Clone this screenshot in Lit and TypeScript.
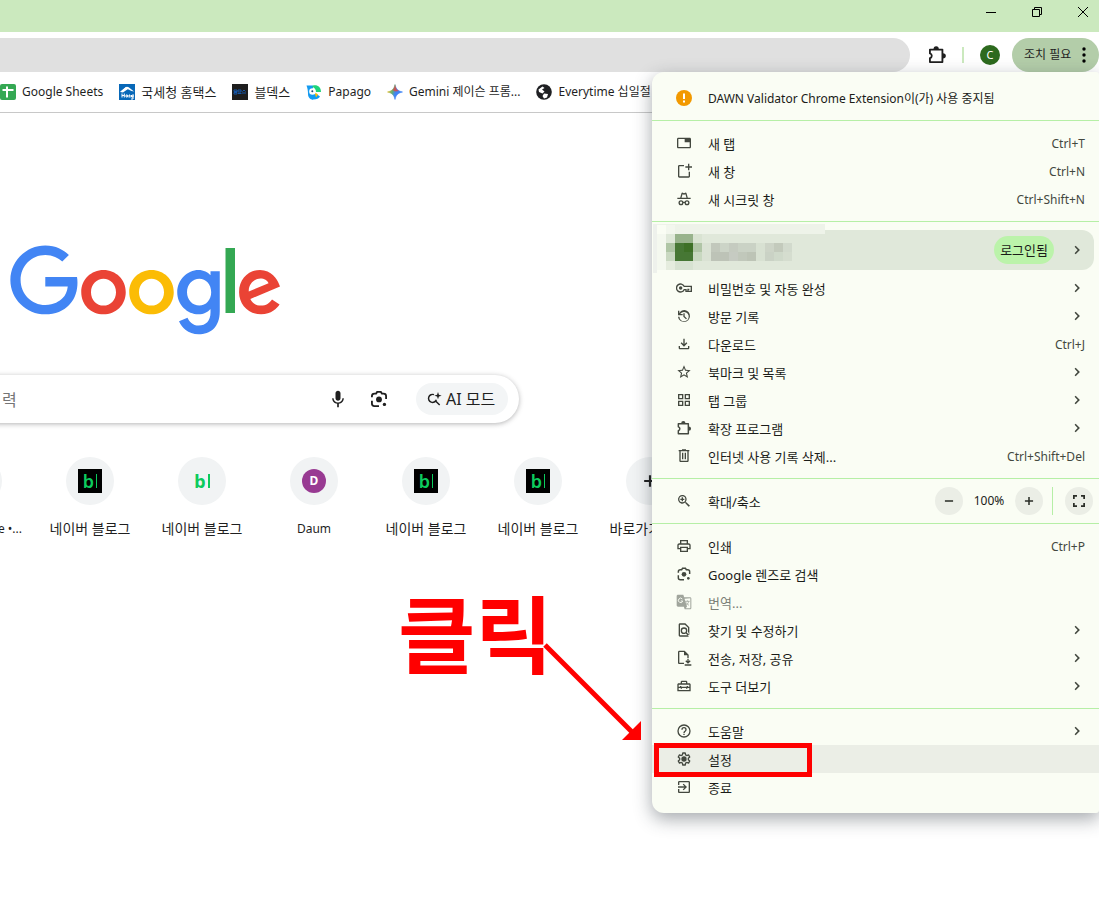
import { LitElement, html, svg, css, nothing } from "lit";
import { customElement } from "lit/decorators.js";
import { classMap } from "lit/directives/class-map.js";

const icon = (body: unknown, size = 16, box = 24) =>
  html`<svg class="icon" width=${size} height=${size} viewBox="0 0 ${box} ${box}" aria-hidden="true">${body}</svg>`;

const glyphs: Record<string, unknown> = {
  tab: svg`<path d="M20.500 4h-17C2.400 4 1.500 4.900 1.500 6v12c0 1.100.9 2 2 2h17c1.100 0 2-.9 2-2V6c0-1.100-.9-2-2-2zm0 14h-17V6H13v5h7.500z"/>`,
  win: svg`<path d="M12 3v2H5v15h14v-7h2v7c0 1.100-.9 2-2 2H5c-1.100 0-2-.9-2-2V5c0-1.100.9-2 2-2h7zm6-2h2v4h4v2h-4v4h-2V7h-4V5h4z"/>`,
  incognito: svg`<path d="M8.200 3.500 6.300 10H2v2h20v-2h-4.300l-1.900-6.500a1.500 1.500 0 0 0-2-.9L12 3.300l-1.800-.7a1.500 1.500 0 0 0-2 .9zM9.800 4.700l2.200.8 2.200-.8L15.700 10H8.300z"/><path fill="none" stroke="currentColor" stroke-width="2" d="M10.300 17.500a2.800 2.800 0 1 1-5.600 0 2.800 2.800 0 0 1 5.600 0zm9 0a2.800 2.800 0 1 1-5.600 0 2.800 2.800 0 0 1 5.600 0zM10.300 17h3.400"/>`,
  key: svg`<path fill="none" stroke="currentColor" stroke-width="2" d="M12.200 9.500A6 6 0 1 0 12.200 14.500H15V17H23V9.500zM18 17v-3h2"/><circle cx="7" cy="12" r="2.600"/>`,
  history: svg`<path d="M13 3a9 9 0 0 0-8 4.900V4H3v7h7V9H6.300A7 7 0 1 1 5.100 13H3a9 9 0 1 0 10-10zm-2 5v5l4 4 1.400-1.400-3.400-3.400V8z"/>`,
  download: svg`<path d="M12 16l-5-5 1.400-1.450 2.600 2.600V4h2v8.150l2.600-2.600L17 11zM4 15h2v3h12v-3h2v3c0 1.100-.9 2-2 2H6c-1.100 0-2-.9-2-2z"/>`,
  star: svg`<path d="M22 9.240l-7.190-.62L12 2 9.190 8.630 2 9.240l5.460 4.730L5.820 21 12 17.270 18.180 21l-1.630-7.030zM12 15.400l-3.760 2.270 1-4.280-3.320-2.880 4.380-.38L12 6.100l1.710 4.040 4.380.38-3.320 2.880 1 4.280z"/>`,
  grid: svg`<path fill-rule="evenodd" d="M3 3h8v8H3zm2 2v4h4V5zm8-2h8v8h-8zm2 2v4h4V5zM3 13h8v8H3zm2 2v4h4v-4zm8-2h8v8h-8zm2 2v4h4v-4z"/>`,
  puzzle: svg`<path fill="none" stroke="currentColor" stroke-width="2.200" stroke-linejoin="round" d="M3.500 5.500h15v15h-15v-4.600a3 3 0 0 0 0-5.800z"/><path d="M7.800 5a3.200 3.600 0 0 1 6.400 0zM19 9.800a3.600 3.200 0 0 1 0 6.400z"/>`,
  trash: svg`<path d="M15 3V2H9v1H4v2h1v14c0 1.100.9 2 2 2h10c1.100 0 2-.9 2-2V5h1V3zm2 16H7V5h10zM9 7h2v10H9zm4 0h2v10h-2z"/>`,
  zoom: svg`<path d="M15.500 14h-.79l-.28-.27A6.500 6.500 0 1 0 13.730 14.430l.27.28v.79l5 4.990L21 19zm-6 0a4.500 4.500 0 1 1 0-9 4.500 4.500 0 0 1 0 9zM8.500 6.500h2v2h2v2h-2v2h-2v-2h-2v-2h2z"/>`,
  print: svg`<path d="M19 8h-1V3H6v5H5c-1.660 0-3 1.340-3 3v6h4v4h12v-4h4v-6c0-1.660-1.340-3-3-3zM8 5h8v3H8zm8 12v2H8v-4h8zm2-2v-2H6v2H4v-4c0-.55.45-1 1-1h14c.55 0 1 .45 1 1v4z"/>`,
  lens: svg`<path fill="none" stroke="currentColor" stroke-width="2.200" d="M3.500 10V8.500a3 3 0 0 1 3-3h2l1.300-2h4.400l1.300 2h2a3 3 0 0 1 3 3V12M3.500 14v3.500a3 3 0 0 0 3 3H12"/><circle cx="12" cy="12.500" r="3.500"/><circle cx="18.500" cy="18.500" r="2"/>`,
  translate: svg`<path d="M3 1h8l1.200 4H21c1.100 0 2 .9 2 2v14c0 1.100-.9 2-2 2h-8l-1.200-4H3c-1.100 0-2-.9-2-2V3c0-1.100.9-2 2-2zm9.800 6 3.700 12.200-2 2.300H21.500V6.500z" fill-rule="evenodd"/><path fill="none" stroke="#fafdf4" stroke-width="1.400" d="M9.500 7.500a3.300 3.300 0 1 0 .6 3H7.200"/><path fill="none" stroke="currentColor" stroke-width="1.200" d="M13.500 11h7M17 9.500V11M19 11c-.5 3-2.500 5-4 6M15 12.500c1 2 2.500 3.500 4.500 4.500"/>`,
  find: svg`<path d="M14 2H6c-1.100 0-2 .9-2 2v16c0 1.100.9 2 2 2h12c.45 0 .85-.15 1.190-.4l-4.430-4.430c-.8.520-1.740.83-2.760.83a5 5 0 1 1 5-5c0 1.020-.31 1.970-.83 2.750L20 19.600V8zM6 20V4h7.200L18 8.800v6.100l.2.200L20 19.600 16.500 20zM9 13a3 3 0 1 0 6 0 3 3 0 0 0-6 0z" fill-rule="evenodd"/>`,
  share: svg`<path d="M13 1H5c-1.100 0-2 .9-2 2v16c0 1.100.9 2 2 2h7v-2H5V3h7v5h5v4h2V7zM17 13h2v4l1.600-1.600L22 16.800l-4 4-4-4 1.400-1.400L17 17zM13 21.500h10v2H13z"/>`,
  tools: svg`<path d="M20 8h-3V6c0-1.100-.9-2-2-2H9c-1.100 0-2 .9-2 2v2H4c-1.100 0-2 .9-2 2v10h20V10c0-1.100-.9-2-2-2zM9 6h6v2H9zm11 12H4v-3h3v1h2v-1h6v1h2v-1h3zm-2-5v-1h-2v1H8v-1H6v1H4v-3h16v3z"/>`,
  help: svg`<path d="M11 18h2v-2h-2zm1-16a10 10 0 1 0 0 20 10 10 0 0 0 0-20zm0 18a8 8 0 1 1 0-16 8 8 0 0 1 0 16zm0-14a4 4 0 0 0-4 4h2a2 2 0 1 1 4 0c0 2-3 1.750-3 5h2c0-2.250 3-2.500 3-5a4 4 0 0 0-4-4z"/>`,
  gear: svg`<path fill="none" stroke="currentColor" stroke-width="2" stroke-linejoin="round" d="M10.200 3h3.600l.6 2.800 1.700 1 2.700-.9 1.800 3.100-2.100 1.900v2.200l2.100 1.900-1.800 3.100-2.700-.9-1.700 1-.6 2.800h-3.600l-.6-2.800-1.700-1-2.700.9L3.400 15l2.100-1.900v-2.200L3.400 9l1.800-3.100 2.700.9 1.700-1z"/><circle cx="12" cy="12" r="4"/>`,
  exit: svg`<path d="M10.090 15.590L11.500 17l5-5-5-5-1.410 1.410L12.670 11H3v2h9.670zM19 3H5c-1.100 0-2 .9-2 2v4h2V5h14v14H5v-4H3v4c0 1.100.9 2 2 2h14c1.100 0 2-.9 2-2V5c0-1.100-.9-2-2-2z"/>`,
  mic: svg`<path d="M12 14c1.660 0 3-1.340 3-3V5c0-1.660-1.340-3-3-3S9 3.340 9 5v6c0 1.660 1.340 3 3 3zm5.300-3c0 3-2.540 5.100-5.300 5.100S6.700 14 6.700 11H5c0 3.410 2.720 6.230 6 6.720V22h2v-4.280c3.280-.48 6-3.300 6-6.720z"/>`,
  ai: svg`<path fill="none" stroke="currentColor" stroke-width="2.200" d="M12 5.500A6 6 0 1 0 15.500 13M14 14.500l6.500 6.500"/><path d="M18 1.500l1.400 4.100L23.500 7l-4.100 1.400L18 12.500l-1.400-4.100L12.500 7l4.100-1.400z"/>`,
  chevron: svg`<path d="M8.400 16.800 13 12 8.400 7.200 10 5.600l6.400 6.400-6.400 6.400z"/>`,
  minus: svg`<path d="M5 10.700h14v2.600H5z"/>`,
  plus: svg`<path d="M19 13.300h-5.700V19h-2.600v-5.700H5v-2.600h5.700V5h2.600v5.700H19z"/>`,
  full: svg`<path d="M3 3h6v2.600H5.600V9H3zm12 0h6v6h-2.600V5.600H15zM3 15h2.600v3.400H9V21H3zm15.400 0H21v6h-6v-2.600h3.400z"/>`,
};

const favicons: Record<string, unknown> = {
  sheets: svg`<rect width="16" height="16" rx="2" fill="#34a853"/><path d="M7 2.500v11M2.500 6h11" stroke="#fff" stroke-width="2"/>`,
  hometax: svg`<rect width="16" height="16" fill="#0868b8"/><path d="M1 8 6.500 3.300c1-.8 2-.8 3.200 0L15 7.500 12.500 7 8.500 5z" fill="#fff"/><path d="M1 8l6-5 2 2-5 3.500z" fill="#fff"/><path d="M3 9.500v4M5.300 9.500v4M3 11.500h2.300M7 11h1.400v2H7zM10 13.500V11h1v2.500M12.500 11v2h1.500v-2.500V15h-2" fill="none" stroke="#fff" stroke-width="1"/>`,
  dex: svg`<rect width="16" height="16" fill="#1e1e1e"/><path d="M2 6h3v1.500H2zM2 8.500h3V10H2zM6 6h3v2H6zM10 9h4M6 9.500h3.500M10.500 7.500 12 6l1.500 1.500" fill="none" stroke="#1556a8" stroke-width="1"/>`,
  papago: svg`<path d="M.5 1.500H7v14H6C3 15 2 12 2 10 2 7 1.500 4 .5 1.500z" fill="#139af0"/><path d="M6 15.500c4 .3 7-.8 8-3L8.500 8.500 6 11z" fill="#0b9cf5"/><path d="M7 1.500c4.500-1 8 1.500 8 6.500H9.500C9.500 5 8.500 3.500 6 3z" fill="#1ed47a"/><path d="M8.500 8l3.500 2.500-2 3z" fill="#fbbc05"/><circle cx="6.500" cy="7.500" r="3.300" fill="#fff"/><circle cx="6.300" cy="7.200" r="1" fill="#164a7a"/>`,
  gemini: svg`<defs><linearGradient id="gem" x1="0" y1=".3" x2="1" y2=".6"><stop offset="0" stop-color="#f9bc15"/><stop offset=".35" stop-color="#5fae7a"/><stop offset=".55" stop-color="#4285f4"/><stop offset="1" stop-color="#3b82f6"/></linearGradient></defs><path d="M8 .5C9 5 11 7 15.500 8 11 9 9 11 8 15.500 7 11 5 9 .5 8 5 7 7 5 8 .5z" fill="url(#gem)" stroke="url(#gem)" stroke-width=".6"/><path d="M8 .5c.8 4 2 5.500 4 6.500L8 7.500 5.500 6C7 5 7.500 3 8 .5z" fill="#ea4335" opacity=".75"/>`,
  everytime: svg`<circle cx="8" cy="8" r="7.800" fill="#1f2023"/><path d="M2.500 5.500 6.500 2.500 8.500 4 6 5.500 8.500 7.500 6.500 9.500 3 8zM8 9.500l4 .5-1 3.500-3 1-1.500-2.500z" fill="#fff"/>`,
};

interface Row {
  icon: string;
  label: string;
  keys?: string;
  more?: boolean;
  state?: string;
}

const tabRows: Row[] = [
  { icon: "tab", label: "새 탭", keys: "Ctrl+T" },
  { icon: "win", label: "새 창", keys: "Ctrl+N" },
  { icon: "incognito", label: "새 시크릿 창", keys: "Ctrl+Shift+N" },
];
const dataRows: Row[] = [
  { icon: "key", label: "비밀번호 및 자동 완성", more: true },
  { icon: "history", label: "방문 기록", more: true },
  { icon: "download", label: "다운로드", keys: "Ctrl+J" },
  { icon: "star", label: "북마크 및 목록", more: true },
  { icon: "grid", label: "탭 그룹", more: true },
  { icon: "puzzle", label: "확장 프로그램", more: true },
  { icon: "trash", label: "인터넷 사용 기록 삭제...", keys: "Ctrl+Shift+Del" },
];
const pageRows: Row[] = [
  { icon: "print", label: "인쇄", keys: "Ctrl+P" },
  { icon: "lens", label: "Google 렌즈로 검색" },
  { icon: "translate", label: "번역...", state: "off" },
  { icon: "find", label: "찾기 및 수정하기", more: true },
  { icon: "share", label: "전송, 저장, 공유", more: true },
  { icon: "tools", label: "도구 더보기", more: true },
];
const endRows: Row[] = [
  { icon: "help", label: "도움말", more: true },
  { icon: "gear", label: "설정", state: "hover" },
  { icon: "exit", label: "종료" },
];

const bookmarks = [
  ["sheets", "Google Sheets"],
  ["hometax", "국세청 홈택스"],
  ["dex", "블덱스"],
  ["papago", "Papago"],
  ["gemini", "Gemini 제이슨 프롬..."],
  ["everytime", "Everytime 십일절"],
];

const shortcuts = [
  ["none", "e •..."],
  ["dark", "네이버 블로그"],
  ["light", "네이버 블로그"],
  ["daum", "Daum"],
  ["dark", "네이버 블로그"],
  ["dark", "네이버 블로그"],
  ["add", "바로가기 추가"],
];

const startsLatin = (text: string) => /^[A-Za-z]/.test(text);

/* Pixelated account area: x, y, width, height, colour. */
const mosaic: [number, number, number, number, string][] = [
  [1, 0, 4, 49, "#eef1ec"], [5, 0, 168, 10, "#eef3e9"],
  [5, 1, 9, 9, "#fafdf4"], [5, 10, 9, 36, "#f4f8ef"], [14, 1, 9, 9, "#f3f7ee"],
  [14, 10, 9, 9, "#e0e9da"], [23, 10, 18, 9, "#98b38c"], [41, 10, 9, 9, "#d9e3d2"],
  [14, 19, 9, 9, "#b0c6a6"], [23, 19, 9, 9, "#467734"], [32, 19, 9, 9, "#3d7026"], [41, 19, 9, 9, "#b0c5a6"],
  [14, 28, 9, 9, "#c9d8c1"], [23, 28, 18, 9, "#467734"], [41, 28, 9, 9, "#c8d8c0"],
  [14, 37, 9, 9, "#e5ecde"], [23, 37, 18, 9, "#d7e2d1"], [50, 19, 9, 18, "#dae2d4"],
  [59, 19, 9, 9, "#c2c8bc"], [68, 19, 9, 9, "#ccd4c7"], [77, 19, 9, 9, "#c5cbc0"], [86, 19, 18, 9, "#cad2c5"],
  [104, 19, 9, 9, "#d8e1d2"], [113, 19, 9, 9, "#cdd4c7"], [122, 19, 9, 9, "#c3cabc"], [131, 19, 9, 9, "#d2dacd"],
  [59, 28, 18, 9, "#bdc3b7"], [77, 28, 9, 9, "#c6cbc2"], [86, 28, 9, 9, "#c1c8bb"], [95, 28, 9, 9, "#bdc4b6"],
  [104, 28, 9, 9, "#d8e1d2"], [113, 28, 9, 9, "#cad2c5"], [122, 28, 9, 9, "#cfd9ca"], [131, 28, 9, 9, "#d5ddcf"],
];

@customElement("app-root")
export class AppRoot extends LitElement {
  static styles = css`
    :host {
      display: block;
      position: relative;
      min-height: 100vh;
      overflow: hidden;
      background: #fff;
      color: #1f1f1f;
      font: 13px/16px "Noto Sans", "Noto Sans CJK KR", sans-serif;
    }
    * { box-sizing: border-box; }
    button, input { font: inherit; color: inherit; border: 0; background: none; padding: 0; margin: 0; outline: 0; }
    a { color: inherit; text-decoration: none; }
    .icon { display: block; flex: none; fill: currentColor; }

    .titlebar { height: 32px; background: #cbe9be; display: flex; justify-content: flex-end; align-items: flex-start; }
    .winbtn { width: 46px; height: 24px; display: grid; place-items: center; }
    .winbtn:last-child { margin-right: -7px; }

    .toolbar { display: flex; align-items: center; padding-top: 6px; height: 40px; }
    .address { flex: 1; height: 34px; background: #e0e0e0; border-radius: 0 17px 17px 0; padding: 0 16px; }
    .ext { margin-left: 17px; width: 20px; }
    .bar { width: 2px; height: 16px; background: #cbe9be; margin: 0 16px 0 15px; }
    .avatar { width: 20px; height: 20px; border-radius: 10px; background: #2d6a1e; color: #fff; font-size: 11px; line-height: 20px; text-align: center; }
    .action { margin-left: 12px; width: 87px; height: 34px; border-radius: 17px; background: #b3cda9; display: flex; align-items: center; gap: 11px; padding-left: 12px; font-size: 12px; }

    .bookmarks { display: flex; align-items: center; gap: 16px; height: 41px; border-bottom: 1px solid #c8c8c8; white-space: nowrap; overflow: hidden; }
    .bookmark { display: flex; align-items: center; gap: 6px; flex: none; height: 40px; }
    .latin { font-size: 12px; }

    .newtab { margin-left: -228px; width: 747px; padding-top: 132px; }
    .logo { display: block; margin: 0 auto; }
    .search { display: flex; align-items: center; height: 48px; margin-top: 38px; padding: 0 11px 0 228px; border-radius: 24px; background: #fff; box-shadow: 0 1px 5px rgba(32, 33, 36, .34); font-size: 16px; color: #1f1f1f; }
    .query { flex: 1; min-width: 0; height: 40px; padding: 2px 0 0 2px; }
    .query::placeholder { color: #757575; opacity: 1; }
    .tool { width: 20px; margin-right: 21px; }
    .ai { display: flex; align-items: center; gap: 4px; height: 32px; width: 92px; padding-left: 10px; margin-left: 6px; border-radius: 16px; background: #f3f5f6; white-space: nowrap; }
    .tiles { display: flex; margin: 34px 0 0 150px; }
    .tile { flex: none; width: 112px; display: flex; flex-direction: column; align-items: center; gap: 16px; font-size: 14px; white-space: nowrap; }
    .tile .latin { font-size: 12px; }
    .tile:first-child .latin { align-self: flex-end; margin-right: 12px; }
    .disc { width: 48px; height: 48px; border-radius: 24px; background: #f1f3f4; display: grid; place-items: center; }
    .fav { display: flex; align-items: center; justify-content: center; gap: 2px; width: 24px; height: 24px; font-size: 18px; line-height: 24px; font-weight: 700; color: #0ccb5d; }
    .fav.dark { background: #000; font-weight: 600; }
    .fav.daum { background: #983a92; border-radius: 12px; color: #fff; font-size: 12px; }
    .caret { width: 1px; height: 14px; background: currentColor; }
    .light .caret { width: 2px; }

    .menu { position: absolute; top: 72px; right: 0; width: 447px; padding-bottom: 12px; background: #fafdf4; border-radius: 12px 3px 3px 12px; box-shadow: 0 6px 18px rgba(40, 50, 60, .42); color: #1a1c18; }
    .group { padding: 8px 0; border-top: 1px solid #b6efa6; }
    .group:last-child { padding-bottom: 0; }
    .row { display: flex; align-items: center; width: 100%; height: 28px; padding: 0 14px 0 24px; text-align: left; color: #43483f; }
    .row.hover { background: #ebeee6; }
    .row.off { color: #a0a59c; }
    .row.off .label { color: #7b7f77; }
    .label { flex: 1; margin-left: 16px; color: #1a1c18; padding-top: 2px; white-space: nowrap; }
    .keys { padding-top: 2px; font-size: 12px; }
    .notice { height: 48px; color: #f29900; padding-top: 4px; font-size: 12px; }
    .profile { position: relative; margin: 0 5px 4px 5px; display: flex; align-items: center; justify-content: flex-end; width: 437px; height: 40px; border-radius: 12px; background: #e0e8da; padding-right: 9px; gap: 15px; color: #43483f; }
    .badge { height: 28px; padding: 0 6px; border-radius: 14px; background: #bbf3aa; line-height: 28px; color: #1a1c18; }
    .mosaic { position: absolute; left: -5px; top: -6px; }
    .zoomrow { display: flex; align-items: center; padding: 0 6px 0 24px; color: #43483f; }
    .round { width: 28px; height: 28px; border-radius: 14px; background: #ebeee6; display: grid; place-items: center; color: #2a2d27; }
    .percent { width: 52px; text-align: center; color: #1a1c18; font-size: 12px; }
    .split { width: 1px; height: 28px; background: #b6efa6; margin: 0 12px 0 9px; }

    .shout { position: absolute; left: 398px; top: 573px; color: #f00; font-size: 84px; line-height: 124px; font-weight: 700; white-space: nowrap; }
    .arrow { position: absolute; left: 540px; top: 640px; }
    .frame { position: absolute; left: 654px; top: 743px; width: 158px; height: 34px; border: 5px solid #f00; pointer-events: none; }
  `;

  private row(r: Row) {
    return html`<button class=${classMap({ row: true, off: r.state === "off", hover: r.state === "hover" })} role="menuitem" ?disabled=${r.state === "off"}>
      ${icon(glyphs[r.icon])}<span class="label">${r.label}</span>
      ${r.keys ? html`<span class="keys">${r.keys}</span>` : nothing}
      ${r.more ? icon(glyphs.chevron) : nothing}
    </button>`;
  }

  private disc(kind: string) {
    if (kind === "none") return nothing;
    if (kind === "add") return icon(glyphs.plus, 20);
    if (kind === "daum") return html`<span class="fav daum">D</span>`;
    return html`<span class="fav ${kind}">b<span class="caret"></span></span>`;
  }

  render() {
    return html`
      <header>
        <div class="titlebar">
          <button class="winbtn" aria-label="최소화"><svg width="10" height="10"><path d="M0 5.500h10" stroke="#000"/></svg></button>
          <button class="winbtn" aria-label="이전 크기로"><svg width="10" height="10" fill="none" stroke="#000"><path d="M.5 2.500h7v7h-7zM2.500 2.500v-2h7v7h-2"/></svg></button>
          <button class="winbtn" aria-label="닫기"><svg width="10" height="10" stroke="#000"><path d="M0 0l10 10M10 0L0 10"/></svg></button>
        </div>
        <div class="toolbar">
          <input class="address" aria-label="주소창" />
          <button class="ext" aria-label="확장 프로그램">${icon(glyphs.puzzle, 20)}</button>
          <span class="bar"></span>
          <button class="avatar" aria-label="프로필">C</button>
          <button class="action">조치 필요 <svg width="4" height="16" viewBox="0 0 4 16"><circle cx="2" cy="2" r="1.700"/><circle cx="2" cy="8" r="1.700"/><circle cx="2" cy="14" r="1.700"/></svg></button>
        </div>
        <nav class="bookmarks">
          ${bookmarks.map(([f, t]) => html`<a class="bookmark" href="#">${icon(favicons[f], 16, 16)}<span class=${classMap({ latin: startsLatin(t) })}>${t}</span></a>`)}
        </nav>
      </header>

      <main class="newtab">
        <svg class="logo" width="272" height="92" viewBox="0 0 272 92" role="img" aria-label="Google">
          <path fill="#EA4335" d="M115.750 47.180c0 12.770-9.990 22.180-22.250 22.180s-22.250-9.410-22.250-22.180C71.250 34.320 81.240 25 93.500 25s22.250 9.320 22.250 22.180zm-9.740 0c0-7.980-5.790-13.440-12.510-13.440S80.990 39.200 80.990 47.180c0 7.900 5.790 13.440 12.510 13.440s12.510-5.550 12.510-13.440z"/>
          <path fill="#FBBC05" d="M163.750 47.180c0 12.770-9.990 22.180-22.250 22.180s-22.250-9.410-22.250-22.180c0-12.850 9.990-22.180 22.250-22.180s22.250 9.320 22.250 22.180zm-9.740 0c0-7.980-5.790-13.440-12.510-13.440s-12.510 5.460-12.510 13.440c0 7.900 5.790 13.440 12.510 13.440s12.510-5.550 12.510-13.440z"/>
          <path fill="#4285F4" d="M209.750 26.340v39.820c0 16.380-9.660 23.070-21.080 23.070-10.750 0-17.220-7.190-19.660-13.070l8.480-3.530c1.510 3.610 5.210 7.870 11.170 7.870 7.310 0 11.840-4.510 11.840-13v-3.190h-.34c-2.180 2.690-6.380 5.040-11.680 5.040-11.090 0-21.250-9.660-21.250-22.090 0-12.520 10.160-22.260 21.250-22.260 5.290 0 9.490 2.350 11.680 4.960h.34v-3.610h9.250zm-8.560 20.920c0-7.810-5.210-13.520-11.840-13.520-6.720 0-12.350 5.710-12.350 13.520 0 7.730 5.630 13.360 12.350 13.360 6.630 0 11.840-5.630 11.840-13.360z"/>
          <path fill="#34A853" d="M225 3v65h-9.500V3h9.500z"/>
          <path fill="#EA4335" d="M262.020 54.480l7.560 5.040c-2.440 3.610-8.320 9.830-18.480 9.830-12.600 0-22.010-9.740-22.010-22.180 0-13.190 9.490-22.180 20.920-22.180 11.510 0 17.140 9.160 18.980 14.110l1.010 2.520-29.650 12.280c2.270 4.450 5.800 6.720 10.750 6.720 4.960 0 8.400-2.440 10.920-6.140zm-23.270-7.980l19.820-8.230c-1.090-2.770-4.370-4.700-8.230-4.700-4.950 0-11.840 4.370-11.590 12.930z"/>
          <path fill="#4285F4" d="M35.290 41.410V32H67c.31 1.640.47 3.580.47 5.680 0 7.060-1.930 15.790-8.150 22.010-6.050 6.300-13.780 9.660-24.020 9.660C16.320 69.350.36 53.890.36 34.910.36 15.930 16.320.47 35.300.47c10.500 0 17.980 4.120 23.600 9.490l-6.640 6.640c-4.030-3.780-9.490-6.720-16.970-6.720-13.860 0-24.700 11.170-24.700 25.030 0 13.860 10.840 25.030 24.700 25.030 8.990 0 14.110-3.610 17.390-6.890 2.660-2.660 4.410-6.460 5.100-11.650l-22.490.01z"/>
        </svg>
        <div class="search">
          <input class="query" placeholder="력" aria-label="검색" />
          <button class="tool" aria-label="음성 검색">${icon(glyphs.mic, 20)}</button>
          <button class="tool" aria-label="이미지 검색">${icon(glyphs.lens, 20)}</button>
          <button class="ai">${icon(glyphs.ai)}<span>AI 모드</span></button>
        </div>
        <div class="tiles">
          ${shortcuts.map(([k, t]) => html`<a class="tile" href="#"><span class="disc">${this.disc(k)}</span><span class=${classMap({ latin: startsLatin(t) })}>${t}</span></a>`)}
        </div>
      </main>

      <div class="menu" role="menu">
        <button class="row notice" role="menuitem">
          ${icon(svg`<circle cx="8" cy="8" r="8"/><path d="M7 3.500h2v5.500H7zM7 10.500h2v2H7z" fill="#fff"/>`, 16, 16)}
          <span class="label">DAWN Validator Chrome Extension이(가) 사용 중지됨</span>
        </button>
        <div class="group">${tabRows.map((r) => this.row(r))}</div>
        <div class="group">
          <button class="profile" role="menuitem">
            <svg class="mosaic" width="174" height="50" aria-hidden="true">
              ${mosaic.map(([x, y, w, h, c]) => svg`<rect x=${x} y=${y} width=${w} height=${h} fill=${c} />`)}
            </svg>
            <span class="badge">로그인됨</span>${icon(glyphs.chevron)}
          </button>
          ${dataRows.map((r) => this.row(r))}
        </div>
        <div class="group">
          <div class="zoomrow">
            ${icon(glyphs.zoom)}<span class="label">확대/축소</span>
            <button class="round" aria-label="축소">${icon(glyphs.minus, 14)}</button>
            <span class="percent">100%</span>
            <button class="round" aria-label="확대">${icon(glyphs.plus, 14)}</button>
            <span class="split"></span>
            <button class="round" aria-label="전체화면">${icon(glyphs.full)}</button>
          </div>
        </div>
        <div class="group">${pageRows.map((r) => this.row(r))}</div>
        <div class="group">${endRows.map((r) => this.row(r))}</div>
      </div>

      <div class="shout">클릭</div>
      <svg class="arrow" width="104" height="104" aria-hidden="true">
        <path d="M5 5 93 93" stroke="#f00" stroke-width="5"/><path d="M101 81v19H82z" fill="#f00"/>
      </svg>
      <div class="frame"></div>
    `;
  }
}
